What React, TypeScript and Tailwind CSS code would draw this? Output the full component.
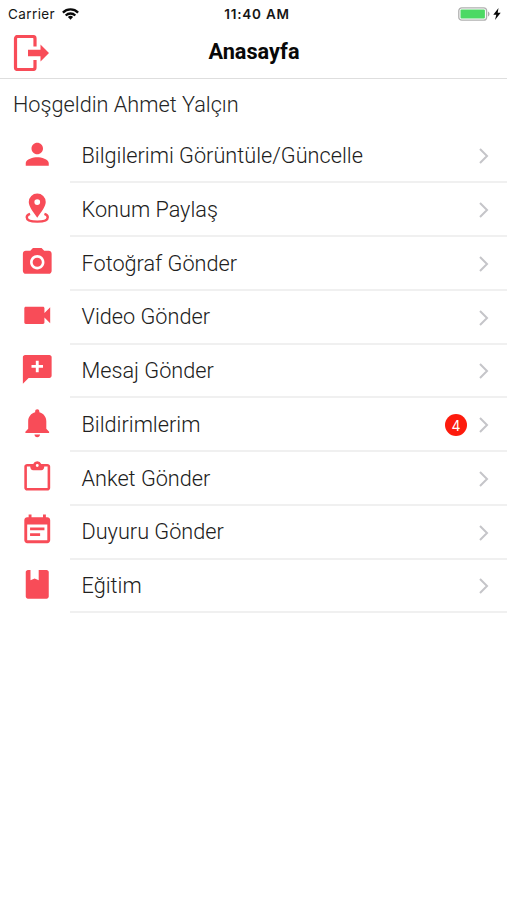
import type { ReactNode } from "react";

type Item = { label: string; icon: ReactNode; badge?: number };

const Icon = ({ children }: { children: ReactNode }) => (
  <svg viewBox="0 0 24 24" className="mb-[4px] size-[34.5px] shrink-0" fill="#f84c58" fillRule="evenodd">
    {children}
  </svg>
);

const items: Item[] = [
  {
    label: "Bilgilerimi Görüntüle/Güncelle",
    icon: <path d="M12 12c2.21 0 4-1.79 4-4s-1.79-4-4-4-4 1.79-4 4 1.79 4 4 4zm0 2c-2.67 0-8 1.34-8 4v2h16v-2c0-2.66-5.33-4-8-4z" />,
  },
  {
    label: "Konum Paylaş",
    icon: (
      <>
        <path d="M12 1.7a5.900 5.900 0 0 0-5.900 5.900c0 2.800 2.600 6.300 5.900 11 3.300-4.700 5.900-8.200 5.900-11A5.900 5.900 0 0 0 12 1.700zm0 4a2 2 0 1 1 0 4 2 2 0 0 1 0-4z" />
        <path d="M7 15.900c-1.500.5-2.300 1.300-2.300 2.300 0 2 3.200 3.100 7.300 3.100s7.300-1.100 7.300-3.100c0-1-.8-1.800-2.300-2.300" fill="none" stroke="#f84c58" strokeWidth="1.700" />
      </>
    ),
  },
  {
    label: "Fotoğraf Gönder",
    icon: <path d="M9 2 7.170 4H4c-1.100 0-2 .9-2 2v12c0 1.100.9 2 2 2h16c1.100 0 2-.9 2-2V6c0-1.100-.9-2-2-2h-3.170L15 2H9zm3 15c-2.760 0-5-2.240-5-5s2.240-5 5-5 5 2.240 5 5-2.240 5-5 5zm0-1.800a3.200 3.200 0 1 0 0-6.400 3.200 3.200 0 0 0 0 6.400z" />,
  },
  {
    label: "Video Gönder",
    icon: <path d="M17 10.500V7c0-.55-.45-1-1-1H4c-.55 0-1 .45-1 1v10c0 .55.45 1 1 1h12c.55 0 1-.45 1-1v-3.500l4 4v-11l-4 4z" />,
  },
  {
    label: "Mesaj Gönder",
    icon: <path d="M20.500 2h-17C2.700 2 2 2.700 2 3.500V22l4-4h14.500c.8 0 1.500-.7 1.500-1.500v-13c0-.8-.7-1.500-1.500-1.500zM16 11h-3v3h-2v-3H8V9h3V6h2v3h3v2z" />,
  },
  {
    label: "Bildirimlerim",
    badge: 4,
    icon: (
      <g transform="scale(.046875)">
        <path d="M256 464c22.779 0 41.411-18.719 41.411-41.600h-82.823c0 22.881 18.633 41.600 41.412 41.600zm134.589-124.800V224.800c0-63.440-44.516-117.518-103.530-131.041V79.200c0-17.682-13.457-31.200-31.059-31.200s-31.059 13.518-31.059 31.200v14.559C165.926 107.282 121.410 161.360 121.410 224.800v114.400L80 380.800v20.800h352v-20.800l-41.411-41.600z" />
      </g>
    ),
  },
  {
    label: "Anket Gönder",
    icon: <path d="M19 2.800h-4.200a3 3 0 0 0-5.600 0H5c-1.100 0-2 .8-2 1.800v14.800c0 1 .9 1.800 2 1.800h14c1.100 0 2-.8 2-1.800V4.600c0-1-.9-1.800-2-1.800zM12 2.800a1 1 0 1 1 0 2 1 1 0 0 1 0-2zm7.200 16.600H4.800V4.600h2.300c.1 1.600.8 2.600 2.100 2.600h5.600c1.300 0 2-1 2.100-2.600h2.300v14.800z" />,
  },
  {
    label: "Duyuru Gönder",
    icon: <path d="M17 10H7v2h10v-2zm2-7h-1V1h-2v2H8V1H6v2H5c-1.110 0-2 .9-2 2v14c0 1.100.89 2 2 2h14c1.100 0 2-.9 2-2V5c0-1.100-.9-2-2-2zm0 16H5V8h14v11zm-5-5H7v2h7v-2z" />,
  },
  {
    label: "Eğitim",
    icon: <path d="M18.500 2H13v7.200L10.200 8 7.300 9.200V2H5.500C4.700 2 4 2.700 4 3.500v17c0 .8.7 1.500 1.500 1.500h13c.8 0 1.500-.7 1.500-1.500v-17c0-.8-.7-1.500-1.500-1.500z" />,
  },
];

function StatusBar() {
  return (
    <div className="grid h-[26px] grid-cols-3 items-center pt-px font-['Inter',sans-serif] text-[13px] leading-none text-[#161616]">
      <div className="flex items-center gap-[7px] pl-[8px]">
        <span className="pt-[2px] text-[13.500px] font-normal tracking-[0.4px]">Carrier</span>
        <svg viewBox="0 0 17 12" className="h-[12px] w-[17px]" fill="none" stroke="#090909" strokeWidth="2.300">
          <path d="M.9 4.600a10.800 10.800 0 0 1 15.200 0M3.700 7.500a6.800 6.800 0 0 1 9.600 0" />
          <path d="m8.500 11.800 2.600-2.800a3.700 3.700 0 0 0-5.200 0z" fill="#090909" stroke="none" />
        </svg>
      </div>
      <span className="pl-[7px] pt-[2px] text-center text-[13.500px] font-semibold tracking-[0.8px]">11:40 AM</span>
      <div className="flex items-center justify-end gap-[3px] pr-[6px]">
        <svg viewBox="0 0 32 14" className="h-[14px] w-[32px]">
          <rect x=".8" y=".8" width="27.800" height="12.400" rx="3" fill="white" stroke="#b0b0b0" strokeWidth="1.300" />
          <rect x="2.500" y="2.500" width="24.400" height="9" rx="1" fill="#4cd964" />
          <path d="M30 4.500c2 .8 2 4.200 0 5z" fill="#aaa" />
        </svg>
        <svg viewBox="0 0 8 12" className="h-[12px] w-[8px]" fill="#080808">
          <path d="M5.500 0 .3 6.800h3L2 12l5.700-7.200h-3z" />
        </svg>
      </div>
    </div>
  );
}

export default function App() {
  return (
    <main className="flex h-[900px] w-full flex-col overflow-hidden bg-white font-['Roboto',sans-serif]">
      <StatusBar />
      <header className="grid h-[53px] shrink-0 grid-cols-3 items-center border-b-[1.500px] border-[#dedede]">
        <svg viewBox="0 0 36 36" className="ml-[13px] mt-px size-[36px]" fill="#f84c58">
          <path d="M22 11.500V3.500a2 2 0 0 0-2-2H4.500a2 2 0 0 0-2 2v29c0 1.100.9 2 2 2H20a2 2 0 0 0 2-2V25" fill="none" stroke="#f84c58" strokeWidth="3.200" />
          <path d="M15 14.700h12.500V9.500L36 18l-8.500 8.500v-5.200H15z" />
        </svg>
        <h1 className="pl-px text-center text-[21.700px] font-bold leading-none text-[#080808]">Anasayfa</h1>
      </header>
      <p className="flex h-[50px] shrink-0 items-center pl-[13px] pt-[2px] text-[21.700px] font-light text-[#242424]">Hoşgeldin Ahmet Yalçın</p>
      <ul className="pt-[0.500px]">
        {items.map((item) => (
          <li key={item.label} className="flex h-[53.750px] items-stretch">
            <div className="flex w-[70px] items-center justify-center pl-[5px]">
              <Icon>{item.icon}</Icon>
            </div>
            <div className="flex flex-1 items-center border-b-2 border-[#f0f0f0] pl-[11.500px] pr-[18px] pt-[2px]">
              <span className="flex-1 text-[21.700px] font-light text-[#202020]">{item.label}</span>
              {item.badge !== undefined && (
                <span className="mr-[12px] flex size-[22px] items-center justify-center rounded-full bg-[#fd1b0d] font-['Inter',sans-serif] text-[14px] text-white">
                  {item.badge}
                </span>
              )}
              <svg viewBox="0 0 10 16" className="h-[16px] w-[10px]" fill="none" stroke="#c5c5c9" strokeWidth="2">
                <path d="m1 1 7 7-7 7" />
              </svg>
            </div>
          </li>
        ))}
      </ul>
    </main>
  );
}
